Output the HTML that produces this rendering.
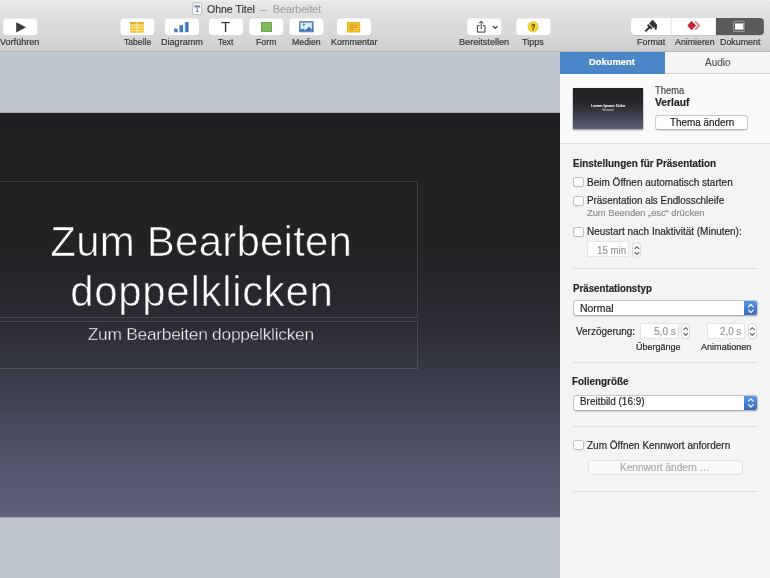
<!DOCTYPE html>
<html lang="de">
<head>
<meta charset="utf-8">
<title>Ohne Titel — Bearbeitet</title>
<style>
*{box-sizing:border-box;margin:0;padding:0}
html,body{width:770px;height:578px;overflow:hidden}
body{font-family:"Liberation Sans",sans-serif;background:#bec5cf;position:relative}
.x{position:absolute;white-space:nowrap;display:block;transform-origin:0 50%;-webkit-text-stroke:.18px currentColor}
.a{position:absolute}
#toolbar{position:absolute;left:0;top:0;width:770px;height:52px;background:linear-gradient(#f3f3f3 0,#e8e8e8 1.2px,#e2e2e2 10px,#d4d4d4 42px,#cfcfcf 50.4px,#b6b6b6 51px,#b4b8be 52px)}
  .btn{position:absolute;top:18.4px;height:17.3px;width:34.3px;background:#fff;border-radius:4px;box-shadow:0 .5px .8px rgba(0,0,0,.2),0 0 .5px rgba(0,0,0,.15)}
#canvas{position:absolute;left:0;top:52px;width:560px;height:526px;background:#bec5cf;overflow:hidden}
#slide{position:absolute;left:-158px;top:61px;width:718px;height:404px;background:linear-gradient(#202022 0,#222224 30%,#26262b 44%,#2e2f38 55%,#3a3b4a 66%,#4b4e63 81%,#5f627a 100%);box-shadow:0 0 1.5px rgba(0,0,0,.5)}
.tb{position:absolute;border:1px solid rgba(255,255,255,.125)}
#panel{position:absolute;left:560px;top:52px;width:210px;height:526px;background:#f4f4f4;border-left:1px solid #f0f0f0}
.hr{position:absolute;height:1px;background:#dcdcdc}
.cb{position:absolute;left:573.3px;width:10.4px;height:10px;border:1px solid #bdbdbd;border-radius:2.5px;background:#fff;box-shadow:0 .5px .5px rgba(0,0,0,.1)}
.sel{position:absolute;left:573px;width:185px;height:16px;border:1px solid #c6c6c6;border-bottom-color:#b2b2b2;border-radius:3.5px;background:#fff;box-shadow:0 .5px 1px rgba(0,0,0,.12);overflow:hidden}
.sel i{position:absolute;right:-1px;top:-1px;width:14px;height:16px;background:linear-gradient(#5c9be6,#3567bd)}
.inp{position:absolute;height:15px;border:1px solid #e4e4e4;background:#fff}
.stp{position:absolute;width:9px;height:16px;border:1px solid #d9d9d9;border-radius:4.5px;background:#fff;box-shadow:0 .5px .5px rgba(0,0,0,.08)}
svg{position:absolute;overflow:visible}
</style>
</head>
<body>
<div id="canvas">
  <div id="slide"></div>
</div>
<div class="tb" style="left:-20px;top:181px;width:437.5px;height:136.5px"></div>
<div class="tb" style="left:-20px;top:321.3px;width:437.5px;height:47.5px"></div>
<div style="position:absolute;left:0;top:0;width:770px;height:578px;will-change:transform">
<span class="x" style="left:50.30px;top:214.00px;font-size:42px;line-height:55px;font-weight:400;color:#ffffff;letter-spacing:0.218px;-webkit-text-stroke:0.7px #26262a;">Zum Bearbeiten</span>
<span class="x" style="left:70.20px;top:264.00px;font-size:42px;line-height:55px;font-weight:400;color:#ffffff;letter-spacing:0.688px;-webkit-text-stroke:0.7px #2d2d34;">doppelklicken</span>
<span class="x" style="left:87.70px;top:322.80px;font-size:17.4px;line-height:23px;font-weight:400;color:#f4f4f6;letter-spacing:-0.277px;-webkit-text-stroke:0.35px #32333c;">Zum Bearbeiten doppelklicken</span>
</div>

<div id="toolbar"></div>
<!-- document icon -->
<svg style="left:192px;top:2px" width="11" height="14" viewBox="0 0 11 14">
  <rect x=".7" y="1" width="8.8" height="11.6" rx=".9" fill="#fbfbfb" stroke="#b4b4b4" stroke-width=".8"/>
  <path d="M2.300 3.400h5.800v2.100H2.300z" fill="#7488a0"/><path d="M4.800 5.500h.9v3.900h-.9zM3.500 9.200h3.500v.8H3.500z" fill="#6a7a8c"/>
</svg>
<svg style="left:0;top:0" width="770" height="52" viewBox="0 0 770 52"><rect x="3.1" y="19.1" width="34.3" height="17" rx="3.8" fill="rgba(0,0,0,.16)"/><rect x="120.3" y="19.1" width="34.3" height="17" rx="3.8" fill="rgba(0,0,0,.16)"/><rect x="164.8" y="19.1" width="34.3" height="17" rx="3.8" fill="rgba(0,0,0,.16)"/><rect x="209.0" y="19.1" width="34.3" height="17" rx="3.8" fill="rgba(0,0,0,.16)"/><rect x="249.2" y="19.1" width="34.3" height="17" rx="3.8" fill="rgba(0,0,0,.16)"/><rect x="289.3" y="19.1" width="34.3" height="17" rx="3.8" fill="rgba(0,0,0,.16)"/><rect x="336.8" y="19.1" width="34.3" height="17" rx="3.8" fill="rgba(0,0,0,.16)"/><rect x="467.1" y="19.1" width="34.3" height="17" rx="3.8" fill="rgba(0,0,0,.16)"/><rect x="516.2" y="19.1" width="34.3" height="17" rx="3.8" fill="rgba(0,0,0,.16)"/><rect x="631" y="18.5" width="132.8" height="17" rx="3.8" fill="rgba(0,0,0,.16)"/><rect x="3.1" y="18.5" width="34.3" height="17" rx="3.8" fill="#fff"/><rect x="120.3" y="18.5" width="34.3" height="17" rx="3.8" fill="#fff"/><rect x="164.8" y="18.5" width="34.3" height="17" rx="3.8" fill="#fff"/><rect x="209.0" y="18.5" width="34.3" height="17" rx="3.8" fill="#fff"/><rect x="249.2" y="18.5" width="34.3" height="17" rx="3.8" fill="#fff"/><rect x="289.3" y="18.5" width="34.3" height="17" rx="3.8" fill="#fff"/><rect x="336.8" y="18.5" width="34.3" height="17" rx="3.8" fill="#fff"/><rect x="467.1" y="18.5" width="34.3" height="17" rx="3.8" fill="#fff"/><rect x="516.2" y="18.5" width="34.3" height="17" rx="3.8" fill="#fff"/><path d="M634.8 18H716V35H634.8a3.800 3.800 0 0 1-3.800-3.800V21.800a3.800 3.800 0 0 1 3.800-3.800z" fill="#fff"/><path d="M715.9 18H760a3.800 3.800 0 0 1 3.800 3.800v9.400a3.800 3.800 0 0 1-3.800 3.800H715.9z" fill="#5a5a5a"/><rect x="670.8" y="18" width=".8" height="17" fill="#e0e0e0"/></svg>
<!-- play -->
<svg style="left:16px;top:21.7px" width="11" height="11" viewBox="0 0 11 11"><path d="M.2.2L10 5.3.2 10.4z" fill="#3b3b3b"/></svg>
<!-- table -->
<svg style="left:130.2px;top:22px" width="14" height="11" viewBox="0 0 14 11">
  <rect x="0" y="0" width="14" height="10.7" rx=".8" fill="#f2c636"/>
  <rect x="0" y="0" width="14" height="2.9" rx=".8" fill="#e6b028"/>
  <path d="M6.6 0h.9v10.7h-.9zM0 2.6h14v.8H0zM0 5.2h14v.8H0zM0 7.8h14v.8H0z" fill="#fdf0c0"/>
</svg>
<!-- chart -->
<svg style="left:174px;top:22px" width="15" height="11" viewBox="0 0 15 11">
  <rect x="0" y="6.6" width="3.6" height="3.6" fill="#3f73b9"/><rect x="5.5" y="3.1" width="3.6" height="7.1" fill="#3f73b9"/><rect x="10.9" y="0" width="3.7" height="10.2" fill="#3f73b9"/>
  <rect x="0" y="6.6" width="1.2" height="3.6" fill="#6a9bd8"/><rect x="5.5" y="3.1" width="1.2" height="7.1" fill="#6a9bd8"/><rect x="10.9" y="0" width="1.2" height="10.2" fill="#6a9bd8"/>
</svg>
<!-- shape -->
<div class="a" style="left:261.1px;top:22px;width:11.1px;height:10.2px;background:#7fb960;border:.8px solid #6ea552"></div>
<!-- media -->
<svg style="left:299.2px;top:21.3px" width="14.7" height="11.3" viewBox="0 0 14.7 11.3">
  <defs><linearGradient id="mg" x1="0" y1="0" x2="0" y2="1"><stop offset="0" stop-color="#6f8fb6"/><stop offset="1" stop-color="#3b72b8"/></linearGradient></defs>
  <rect x="0" y="0" width="14.7" height="11.3" rx=".8" fill="url(#mg)"/>
  <rect x="1.400" y="1.700" width="11.5" height="8.600" fill="#dcebfa"/>
  <circle cx="4.800" cy="3.700" r="1.100" fill="#5f7fa6"/>
  <path d="M1.400 8.800L3.600 7.600 6.400 9.200 10.200 5.800 12.900 8.800V10.300H1.400z" fill="#3e73b6"/>
</svg>
<!-- comment -->
<svg style="left:347px;top:21.8px" width="14" height="11" viewBox="0 0 14 11">
  <rect x="0" y="0" width="13.2" height="10.5" rx=".6" fill="#ebb41f"/>
  <rect x="1.3" y="1.3" width="10.6" height="7.9" fill="#f5c636"/>
  <path d="M2.6 2.8h8v.9h-8zM2.6 4.8h8v.9h-8zM2.6 6.8h4.6v.9H2.6z" fill="#d98d14"/>
</svg>
<!-- share -->
<svg style="left:475.5px;top:20px" width="24" height="13" viewBox="0 0 24 13">
  <path d="M3.500 5.600H1.400v6.500h7.600V5.600H6.900" fill="none" stroke="#3a3a3a" stroke-width="1" stroke-linejoin="round"/>
  <path d="M5.200 9V1.300M3 3.300L5.200 1.100l2.200 2.200" fill="none" stroke="#3a3a3a" stroke-width="1"/>
  <path d="M16.900 6.100l2.300 2.200 2.300-2.200" fill="none" stroke="#3a3a3a" stroke-width="1.200"/>
</svg>
<!-- tips -->
<svg style="left:527px;top:21px" width="12" height="12" viewBox="0 0 12 12"><circle cx="6.100" cy="5.700" r="5.300" fill="#f1cf2e" stroke="#e4bc22" stroke-width=".5"/></svg>
<!-- format brush -->
<svg style="left:640px;top:17px" width="24.06" height="18.06" viewBox="0 0 770 578">
  <path d="M192 438L312 323" stroke="#333" stroke-width="66" stroke-linecap="round" fill="none"/>
  <path d="M222 272L268 226L404 352L360 398Z" fill="#333"/>
  <path d="M292 212L385 98L418 104L472 160L546 250L541 340L523 413L481 406L467 338L424 346Z" fill="#333"/>
  <circle cx="203" cy="432" r="9" fill="#ddd"/>
</svg>
<!-- animate -->
<svg style="left:636px;top:16px" width="70" height="22" viewBox="0 0 770 242">
  <path d="M636 60L666 60L708 105L666 152L636 152L678 105Z" fill="#e3858c"/>
  <path d="M612 54L660 105L612 158L564 105Z" fill="#cd1f2b"/>
</svg>
<!-- document seg icon -->
<svg style="left:730px;top:18px" width="18" height="17" viewBox="0 0 18 17">
  <rect x="3.500" y="3.300" width="10.700" height="10.200" rx=".6" fill="none" stroke="#a2a2a2" stroke-width=".9"/>
  <rect x="5" y="5.400" width="8.400" height="6.300" fill="#fff"/>
</svg>

<div id="panel"></div>
<div class="a" style="left:560px;top:52px;width:210px;height:91px;background:#fafafa"></div>
<div class="a" style="left:560px;top:52px;width:105.3px;height:21.6px;background:#4a86c8"></div>
<div class="a" style="left:665.3px;top:52px;width:104.7px;height:21.6px;background:#f5f5f5;border-bottom:1px solid #d2d2d2"></div>
<!-- thumbnail -->
<div class="a" style="left:572.8px;top:88.3px;width:70.4px;height:40.5px;background:linear-gradient(#222224 0,#26262a 35%,#3c3d4a 65%,#5e627a 100%);box-shadow:0 .5px 2px rgba(0,0,0,.45)"></div>
<!-- theme button -->
<div class="a" style="left:655.4px;top:114.6px;width:92.8px;height:15.2px;background:#fff;border:1px solid #c9c9c9;border-bottom-color:#b5b5b5;border-radius:3.5px;box-shadow:0 .5px 1px rgba(0,0,0,.12)"></div>
<div class="hr" style="left:560px;top:143px;width:210px;background:#dadada"></div>
<div class="cb" style="top:177.4px"></div>
<div class="cb" style="top:196px"></div>
<div class="cb" style="top:226.8px"></div>
<div class="cb" style="top:440.3px"></div>
<div class="inp" style="left:587.3px;top:241.4px;width:42.2px;height:15.6px"></div>
<div class="stp" style="left:632.4px;top:242.2px"></div>
<div class="hr" style="left:573px;top:267.8px;width:185px"></div>
<div class="sel" style="top:300.4px"><i></i></div>
<div class="inp" style="left:639.5px;top:323.2px;width:39.5px;height:15.6px"></div>
<div class="stp" style="left:681.4px;top:323.4px"></div>
<div class="inp" style="left:706.5px;top:323.2px;width:38.5px;height:15.6px"></div>
<div class="stp" style="left:748px;top:323.4px"></div>
<div class="hr" style="left:573px;top:362px;width:185px"></div>
<div class="sel" style="top:394.8px"><i></i></div>
<div class="hr" style="left:573px;top:426.4px;width:185px"></div>
<div class="a" style="left:587.5px;top:459.8px;width:155.5px;height:14.8px;background:#f9f9f9;border:1px solid #e0e0e0;border-radius:3.5px"></div>
<div class="hr" style="left:573px;top:490.5px;width:185px"></div>
<!-- stepper chevrons & select chevrons -->
<svg style="left:0;top:0" width="770" height="578" viewBox="0 0 770 578" fill="none" stroke-linecap="round" stroke-linejoin="round">
  <g stroke="#606060" stroke-width="1.15">
    <path d="M634.9 248.7l2-2 2 2M634.9 252.4l2 2 2-2"/>
    <path d="M683.7 329.700l2-2 2 2M683.7 333.400l2 2 2-2"/>
    <path d="M750.3 329.700l2-2 2 2M750.3 333.400l2 2 2-2"/>
  </g>
  <g stroke="#fff" stroke-width="1.2">
    <path d="M748.5 306.800l2.400-2.400 2.400 2.400M748.5 310.200l2.400 2.400 2.400-2.400"/>
    <path d="M748.5 401.200l2.400-2.400 2.400 2.400M748.5 404.600l2.400 2.400 2.400-2.400"/>
  </g>
</svg>
<div style="position:absolute;left:0;top:0;width:770px;height:578px;will-change:transform">
<span class="x" style="left:206.80px;top:1.80px;font-size:10.6px;line-height:14px;font-weight:400;color:#3b3b3b;transform:scaleX(0.9912);">Ohne Titel</span>
<span class="x" style="left:260.20px;top:1.80px;font-size:10.6px;line-height:14px;font-weight:400;color:#a3a3a3;transform:scaleX(0.6182);">—</span>
<span class="x" style="left:273.20px;top:1.80px;font-size:10.6px;line-height:14px;font-weight:400;color:#a3a3a3;transform:scaleX(0.9969);">Bearbeitet</span>
<span class="x" style="left:0.00px;top:35.60px;font-size:9.1px;line-height:12px;font-weight:400;color:#333333;transform:scaleX(0.9981);">Vorführen</span>
<span class="x" style="left:123.80px;top:35.60px;font-size:9.1px;line-height:12px;font-weight:400;color:#333333;transform:scaleX(0.9458);">Tabelle</span>
<span class="x" style="left:160.80px;top:35.60px;font-size:9.1px;line-height:12px;font-weight:400;color:#333333;transform:scaleX(0.9960);">Diagramm</span>
<span class="x" style="left:217.90px;top:35.60px;font-size:9.1px;line-height:12px;font-weight:400;color:#333333;transform:scaleX(0.9154);">Text</span>
<span class="x" style="left:255.80px;top:35.60px;font-size:9.1px;line-height:12px;font-weight:400;color:#333333;transform:scaleX(0.9641);">Form</span>
<span class="x" style="left:292.10px;top:35.60px;font-size:9.1px;line-height:12px;font-weight:400;color:#333333;transform:scaleX(0.9608);">Medien</span>
<span class="x" style="left:330.50px;top:35.60px;font-size:9.1px;line-height:12px;font-weight:400;color:#333333;transform:scaleX(0.9899);">Kommentar</span>
<span class="x" style="left:458.90px;top:35.60px;font-size:9.1px;line-height:12px;font-weight:400;color:#333333;transform:scaleX(1.0023);">Bereitstellen</span>
<span class="x" style="left:521.90px;top:35.60px;font-size:9.1px;line-height:12px;font-weight:400;color:#333333;transform:scaleX(0.9887);">Tipps</span>
<span class="x" style="left:636.70px;top:35.60px;font-size:9.1px;line-height:12px;font-weight:400;color:#333333;transform:scaleX(0.9838);">Format</span>
<span class="x" style="left:674.90px;top:35.60px;font-size:9.1px;line-height:12px;font-weight:400;color:#333333;transform:scaleX(0.9686);">Animieren</span>
<span class="x" style="left:719.70px;top:35.60px;font-size:9.1px;line-height:12px;font-weight:400;color:#333333;transform:scaleX(0.9757);">Dokument</span>
<span class="x" style="left:588.90px;top:56.10px;font-size:9.6px;line-height:12px;font-weight:700;color:#ffffff;transform:scaleX(0.9788);">Dokument</span>
<span class="x" style="left:704.50px;top:55.80px;font-size:10.1px;line-height:13px;font-weight:400;color:#555555;transform:scaleX(0.9885);">Audio</span>
<span class="x" style="left:654.60px;top:83.80px;font-size:10.1px;line-height:13px;font-weight:400;color:#444444;transform:scaleX(0.9276);">Thema</span>
<span class="x" style="left:654.60px;top:95.60px;font-size:10.4px;line-height:14px;font-weight:700;color:#222222;transform:scaleX(0.9917);">Verlauf</span>
<span class="x" style="left:669.60px;top:115.60px;font-size:10.1px;line-height:13px;font-weight:400;color:#222222;transform:scaleX(0.9779);">Thema ändern</span>
<span class="x" style="left:572.80px;top:155.70px;font-size:10.6px;line-height:14px;font-weight:700;color:#262626;transform:scaleX(0.9311);">Einstellungen für Präsentation</span>
<span class="x" style="left:587.30px;top:175.60px;font-size:10.1px;line-height:13px;font-weight:400;color:#262626;transform:scaleX(0.9925);">Beim Öffnen automatisch starten</span>
<span class="x" style="left:587.40px;top:193.70px;font-size:10.1px;line-height:13px;font-weight:400;color:#262626;transform:scaleX(0.9783);">Präsentation als Endlosschleife</span>
<span class="x" style="left:587.40px;top:208.10px;font-size:8.7px;line-height:11px;font-weight:400;color:#8c8c8c;transform:scaleX(1.0712);">Zum Beenden „esc“ drücken</span>
<span class="x" style="left:587.40px;top:224.60px;font-size:10.1px;line-height:13px;font-weight:400;color:#262626;transform:scaleX(0.9883);">Neustart nach Inaktivität (Minuten):</span>
<span class="x" style="left:596.80px;top:243.60px;font-size:10.1px;line-height:13px;font-weight:400;color:#969696;transform:scaleX(0.9635);">15 min</span>
<span class="x" style="left:573.20px;top:280.50px;font-size:10.6px;line-height:14px;font-weight:700;color:#262626;transform:scaleX(0.9170);">Präsentationstyp</span>
<span class="x" style="left:580.20px;top:301.60px;font-size:10.1px;line-height:13px;font-weight:400;color:#222222;transform:scaleX(1.0345);">Normal</span>
<span class="x" style="left:576.00px;top:324.70px;font-size:10.1px;line-height:13px;font-weight:400;color:#262626;transform:scaleX(0.9841);">Verzögerung:</span>
<span class="x" style="left:653.70px;top:324.70px;font-size:10.1px;line-height:13px;font-weight:400;color:#969696;transform:scaleX(0.9983);">5,0 s</span>
<span class="x" style="left:720.40px;top:324.70px;font-size:10.1px;line-height:13px;font-weight:400;color:#969696;transform:scaleX(0.9709);">2,0 s</span>
<span class="x" style="left:636.30px;top:342.00px;font-size:8.6px;line-height:11px;font-weight:400;color:#262626;transform:scaleX(1.0457);">Übergänge</span>
<span class="x" style="left:701.00px;top:342.00px;font-size:8.6px;line-height:11px;font-weight:400;color:#262626;transform:scaleX(1.0543);">Animationen</span>
<span class="x" style="left:572.40px;top:374.30px;font-size:10.6px;line-height:14px;font-weight:700;color:#262626;transform:scaleX(0.9320);">Foliengröße</span>
<span class="x" style="left:579.60px;top:395.30px;font-size:10.1px;line-height:13px;font-weight:400;color:#222222;transform:scaleX(0.9820);">Breitbild (16:9)</span>
<span class="x" style="left:587.10px;top:438.70px;font-size:10.1px;line-height:13px;font-weight:400;color:#262626;transform:scaleX(0.9906);">Zum Öffnen Kennwort anfordern</span>
<span class="x" style="left:620.30px;top:460.90px;font-size:10.1px;line-height:13px;font-weight:400;color:#ababab;transform:scaleX(1.0002);">Kennwort ändern …</span>
<span class="x" style="left:590.70px;top:103.30px;font-size:4.3px;line-height:6px;font-weight:400;color:#f4f4f4;transform:scaleX(0.9379);">Lorem Ipsum Dolor</span>
<span class="x" style="left:601.50px;top:109.40px;font-size:2.6px;line-height:3px;font-weight:400;color:#9c9ca6;transform:scaleX(1.2253);">Sit amet</span>
<span class="x" style="left:221.30px;top:17.10px;font-size:15.4px;line-height:20px;font-weight:400;color:#2c2c2c;transform:scaleX(0.9700);-webkit-text-stroke:.15px #fff;">T</span>
<span class="x" style="left:531.20px;top:21.20px;font-size:9px;line-height:12px;font-weight:700;color:#4a3a10;transform:scaleX(0.8000);">?</span>
</div>
</body>
</html>
